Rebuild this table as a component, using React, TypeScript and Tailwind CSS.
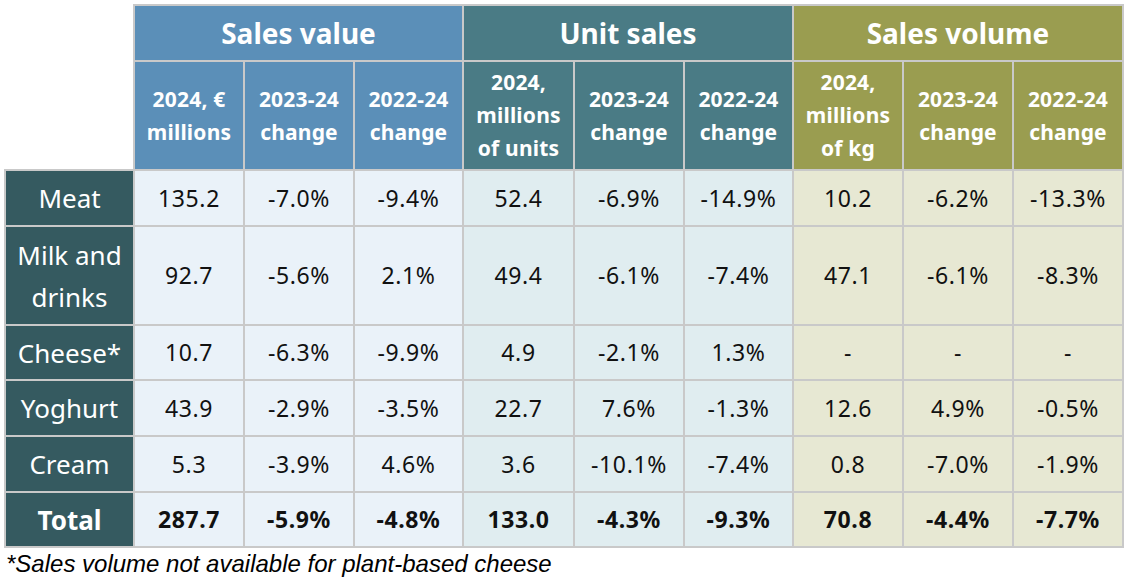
const groups = [
  { title: "Sales value", head: "bg-[#5b8fb8]", cell: "bg-[#eaf2f9]" },
  { title: "Unit sales", head: "bg-[#4a7b85]", cell: "bg-[#e0edf0]" },
  { title: "Sales volume", head: "bg-[#9a9d50]", cell: "bg-[#e7e8d3]" },
];

const subHeads = [
  ["2024, €", "millions"],
  ["2023-24", "change"],
  ["2022-24", "change"],
  ["2024,", "millions", "of units"],
  ["2023-24", "change"],
  ["2022-24", "change"],
  ["2024,", "millions", "of kg"],
  ["2023-24", "change"],
  ["2022-24", "change"],
];

const rows: { name: string[]; h: string; values: string[]; bold?: boolean }[] = [
  { name: ["Meat"], h: "h-[56px]", values: ["135.2", "-7.0%", "-9.4%", "52.4", "-6.9%", "-14.9%", "10.2", "-6.2%", "-13.3%"] },
  { name: ["Milk and", "drinks"], h: "h-[99px]", values: ["92.7", "-5.6%", "2.1%", "49.4", "-6.1%", "-7.4%", "47.1", "-6.1%", "-8.3%"] },
  { name: ["Cheese*"], h: "h-[55px]", values: ["10.7", "-6.3%", "-9.9%", "4.9", "-2.1%", "1.3%", "-", "-", "-"] },
  { name: ["Yoghurt"], h: "h-[56px]", values: ["43.9", "-2.9%", "-3.5%", "22.7", "7.6%", "-1.3%", "12.6", "4.9%", "-0.5%"] },
  { name: ["Cream"], h: "h-[56px]", values: ["5.3", "-3.9%", "4.6%", "3.6", "-10.1%", "-7.4%", "0.8", "-7.0%", "-1.9%"] },
  { name: ["Total"], h: "h-[55px]", values: ["287.7", "-5.9%", "-4.8%", "133.0", "-4.3%", "-9.3%", "70.8", "-4.4%", "-7.7%"], bold: true },
];

const colWidths = ["w-[129px]", "w-[110px]", "w-[110px]", "w-[109px]", "w-[111px]", "w-[110px]", "w-[109px]", "w-[110px]", "w-[110px]", "w-[110px]"];

export default function App() {
  return (
    <div className="bg-white w-[1128px] h-[579px] pt-[4px] pl-[4px]" style={{ fontFamily: '"Noto Sans", sans-serif' }}>
      <table className="table-fixed border-collapse">
        <colgroup>
          {colWidths.map((w, i) => (
            <col key={i} className={w} />
          ))}
        </colgroup>
        <thead>
          <tr className="h-[56px]">
            <th className="border-0 bg-white"></th>
            {groups.map((g) => (
              <th
                key={g.title}
                colSpan={3}
                className={`${g.head} border-2 border-[#c9c9c9] text-white text-[28px] font-bold leading-none`}
              >
                {g.title}
              </th>
            ))}
          </tr>
          <tr className="h-[109px]">
            <th className="border-0 bg-white"></th>
            {subHeads.map((lines, i) => (
              <th
                key={i}
                className={`${groups[Math.floor(i / 3)].head} border-2 border-[#c9c9c9] text-white text-[21px] font-bold leading-[33px] tracking-[0.2px]`}
              >
                {lines.map((l, j) => (
                  <div key={j}>{l}</div>
                ))}
              </th>
            ))}
          </tr>
        </thead>
        <tbody>
          {rows.map((r) => (
            <tr key={r.name.join(" ")} className={r.h}>
              <th
                className={`bg-[#355a60] border-2 border-[#c9c9c9] text-white text-[26px] leading-[42px] ${r.bold ? "font-bold" : "font-normal"}`}
              >
                {r.name.map((l, j) => (
                  <div key={j}>{l}</div>
                ))}
              </th>
              {r.values.map((v, i) => (
                <td
                  key={i}
                  className={`${groups[Math.floor(i / 3)].cell} border-2 border-[#c9c9c9] text-center text-[#111] text-[23px] tracking-[0.6px] ${r.bold ? "font-bold" : "font-normal"}`}
                >
                  {v}
                </td>
              ))}
            </tr>
          ))}
        </tbody>
      </table>
      <p className="mt-[2px] pl-[2px] text-[24px] italic leading-[28px] text-black" style={{ fontFamily: '"Liberation Sans", Arial, sans-serif' }}>
        *Sales volume not available for plant-based cheese
      </p>
    </div>
  );
}
